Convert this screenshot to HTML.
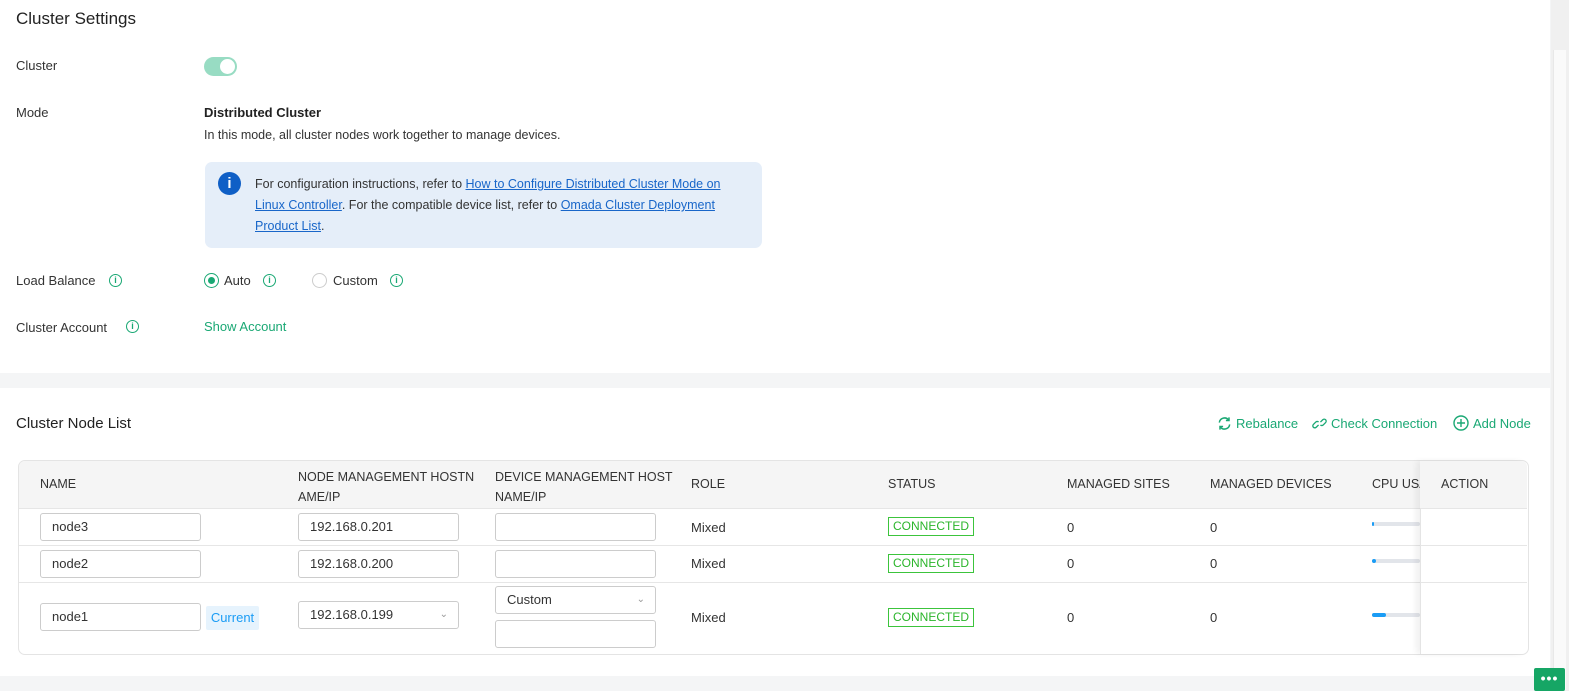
<!DOCTYPE html>
<html><head><meta charset="utf-8"><style>
*{box-sizing:border-box;margin:0;padding:0}
body{width:1569px;height:691px;background:#f4f5f6;font-family:"Liberation Sans",sans-serif;color:#333;position:relative;overflow:hidden;font-size:13px}
.a{position:absolute;white-space:nowrap}
.card{position:absolute;background:#fff;left:0;width:1550px}
.g{color:#1aa874}
.inp{position:absolute;border:1px solid #ccc;border-radius:3px;height:28px;padding-left:11px;line-height:26px;font-size:13px;color:#333;background:#fff}
.info{display:inline-block;width:13px;height:13px;border:1.3px solid #1aa874;border-radius:50%;color:#1aa874;font-size:9px;line-height:11px;text-align:center;font-weight:bold}
.st{position:absolute;border:1px solid #3cc43c;color:#2bb52b;font-size:12px;height:19px;line-height:17px;padding:0 4px}
.bar{position:absolute;height:4px;width:48px;background:#e2e5ea;border-radius:2px}
.bar i{display:block;height:4px;background:#1a9cf5;border-radius:2px}
.hl{position:absolute;left:19px;width:1508px;height:1px;background:#e6e6e6}
a{color:#1866c9;text-decoration:underline}
</style></head><body>
<div class="card" style="top:0;height:373px"></div>
<div class="card" style="top:388px;height:288px"></div>
<div class="a" style="left:1551px;top:0;width:18px;height:691px;background:#f0f0f0"></div>
<div class="a" style="left:1553px;top:50px;width:13px;height:640px;background:#fafafa;border-left:1px solid #e8e8e8"></div>

<div class="a" style="left:16px;top:9px;font-size:17px;color:#222">Cluster Settings</div>
<div class="a" style="left:16px;top:58px">Cluster</div>
<div class="a" style="left:204px;top:57px;width:33px;height:19px;border-radius:10px;background:#98dcc3"></div>
<div class="a" style="left:220px;top:59px;width:15px;height:15px;border-radius:50%;background:#fff"></div>
<div class="a" style="left:16px;top:105px">Mode</div>
<div class="a" style="left:204px;top:105px;color:#222;font-weight:bold">Distributed Cluster</div>
<div class="a" style="left:204px;top:128px;font-size:12.5px">In this mode, all cluster nodes work together to manage devices.</div>
<div class="a" style="left:205px;top:162px;width:557px;height:86px;background:#e5eef9;border-radius:7px"></div>
<div class="a" style="left:218px;top:172px;width:23px;height:23px;border-radius:50%;background:#0f5fc6;color:#fff;text-align:center;font-weight:bold;font-size:15px;line-height:23px">i</div>
<div class="a" style="left:255px;top:174px;width:480px;white-space:normal;line-height:21px;font-size:12.5px">For configuration instructions, refer to <a>How to Configure Distributed Cluster Mode on Linux Controller</a>. For the compatible device list, refer to <a>Omada Cluster Deployment Product List</a>.</div>
<div class="a" style="left:16px;top:273px">Load Balance</div><span class="info a" style="left:109px;top:274px">i</span>
<div class="a" style="left:204px;top:273px;width:15px;height:15px;border:1px solid #1aa874;border-radius:50%"></div>
<div class="a" style="left:208px;top:277px;width:7px;height:7px;border-radius:50%;background:#1aa874"></div>
<div class="a" style="left:224px;top:273px">Auto</div><span class="info a" style="left:263px;top:274px">i</span>
<div class="a" style="left:312px;top:273px;width:15px;height:15px;border:1px solid #ccc;border-radius:50%"></div>
<div class="a" style="left:333px;top:273px">Custom</div><span class="info a" style="left:390px;top:274px">i</span>
<div class="a" style="left:16px;top:320px">Cluster Account</div><span class="info a" style="left:126px;top:320px">i</span>
<div class="a g" style="left:204px;top:319px">Show Account</div>

<div class="a" style="left:16px;top:415px;font-size:15px;color:#222">Cluster Node List</div>
<svg class="a" style="left:1217px;top:416px" width="15" height="15" viewBox="0 0 16 16" fill="none" stroke="#1aa874" stroke-width="1.6"><path d="M2.5 7A5.5 5.5 0 0 1 12.5 4.5M13.5 9A5.5 5.5 0 0 1 3.5 11.5"/><path d="M12.8 1.5v3.3H9.5M3.2 14.5v-3.3h3.3"/></svg>
<div class="a g" style="left:1236px;top:416px">Rebalance</div>
<svg class="a" style="left:1312px;top:416px" width="15" height="15" viewBox="0 0 16 16" fill="none" stroke="#1aa874" stroke-width="1.4"><path d="M7 9.5l-2.5 2.5a2 2 0 0 1-3-3L4 6.5a2 2 0 0 1 3 0M9 6.5l2.5-2.5a2 2 0 0 1 3 3L12 9.5a2 2 0 0 1-3 0"/></svg>
<div class="a g" style="left:1331px;top:416px">Check Connection</div>
<svg class="a" style="left:1453px;top:415px" width="16" height="16" viewBox="0 0 16 16" fill="none" stroke="#1aa874" stroke-width="1.4"><circle cx="8" cy="8" r="7"/><path d="M8 4v8M4 8h8"/></svg>
<div class="a g" style="left:1473px;top:416px">Add Node</div>

<div class="a" style="left:18px;top:460px;width:1511px;height:195px;border:1px solid #e4e4e4;border-radius:7px"></div>
<div class="a" style="left:19px;top:461px;width:1508px;height:47px;background:#f5f5f5;border-radius:6px 6px 0 0"></div>
<div class="hl" style="top:508px"></div><div class="hl" style="top:545px"></div><div class="hl" style="top:582px"></div>
<div style="font-size:12.5px;color:#333">
<div class="a" style="left:40px;top:477px">NAME</div>
<div class="a" style="left:298px;top:467px;line-height:20px">NODE MANAGEMENT HOSTN<br>AME/IP</div>
<div class="a" style="left:495px;top:467px;line-height:20px">DEVICE MANAGEMENT HOST<br>NAME/IP</div>
<div class="a" style="left:691px;top:477px">ROLE</div>
<div class="a" style="left:888px;top:477px">STATUS</div>
<div class="a" style="left:1067px;top:477px">MANAGED SITES</div>
<div class="a" style="left:1210px;top:477px">MANAGED DEVICES</div>
<div class="a" style="left:1372px;top:477px">CPU USA</div>
</div>
<div class="inp" style="left:40px;top:513px;width:161px">node3</div>
<div class="inp" style="left:298px;top:513px;width:161px">192.168.0.201</div>
<div class="inp" style="left:495px;top:513px;width:161px"></div>
<div class="inp" style="left:40px;top:550px;width:161px">node2</div>
<div class="inp" style="left:298px;top:550px;width:161px">192.168.0.200</div>
<div class="inp" style="left:495px;top:550px;width:161px"></div>
<div class="inp" style="left:40px;top:603px;width:161px">node1</div>
<div class="a" style="left:206px;top:606px;width:53px;height:24px;background:#e6f3fd;color:#1a9cf5;text-align:center;line-height:24px;border-radius:2px">Current</div>
<div class="inp" style="left:298px;top:601px;width:161px">192.168.0.199<span style="position:absolute;right:10px;color:#999;font-size:10px">&#8964;</span></div>
<div class="inp" style="left:495px;top:586px;width:161px">Custom<span style="position:absolute;right:10px;color:#999;font-size:10px">&#8964;</span></div>
<div class="inp" style="left:495px;top:620px;width:161px"></div>
<div class="a" style="left:691px;top:520px">Mixed</div><div class="a" style="left:691px;top:556px">Mixed</div><div class="a" style="left:691px;top:610px">Mixed</div>
<div class="st" style="left:888px;top:517px">CONNECTED</div><div class="st" style="left:888px;top:554px">CONNECTED</div><div class="st" style="left:888px;top:608px">CONNECTED</div>
<div class="a" style="left:1067px;top:520px">0</div><div class="a" style="left:1067px;top:556px">0</div><div class="a" style="left:1067px;top:610px">0</div>
<div class="a" style="left:1210px;top:520px">0</div><div class="a" style="left:1210px;top:556px">0</div><div class="a" style="left:1210px;top:610px">0</div>
<div class="bar" style="left:1372px;top:522px"><i style="width:2px"></i></div>
<div class="bar" style="left:1372px;top:559px"><i style="width:4px"></i></div>
<div class="bar" style="left:1372px;top:613px"><i style="width:14px"></i></div>
<div class="a" style="left:1420px;top:461px;width:107px;height:193px;background:#fff;border-left:1px solid #e4e4e4;box-shadow:-4px 0 6px rgba(0,0,0,.06);border-radius:0 6px 6px 0"></div>
<div class="a" style="left:1420px;top:461px;width:107px;height:47px;background:#f5f5f5;border-radius:0 6px 0 0"></div>
<div class="a" style="left:1421px;top:508px;width:106px;height:1px;background:#e6e6e6"></div>
<div class="a" style="left:1421px;top:545px;width:106px;height:1px;background:#e6e6e6"></div>
<div class="a" style="left:1421px;top:582px;width:106px;height:1px;background:#e6e6e6"></div>
<div class="a" style="left:1441px;top:477px;font-size:12.5px">ACTION</div>
<div class="a" style="left:1534px;top:668px;width:31px;height:23px;background:#16a665;border-radius:2px;color:#fff;text-align:center;font-size:14px;line-height:20px;letter-spacing:1px;font-weight:bold">•••</div>
</body></html>
